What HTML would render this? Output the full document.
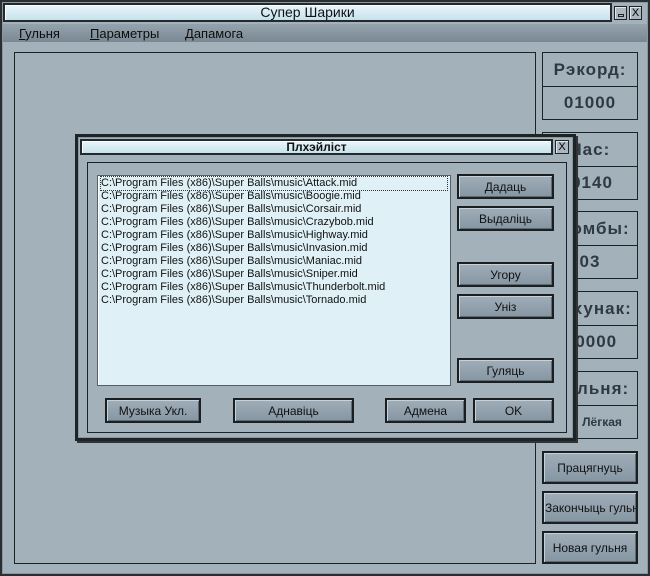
<!DOCTYPE html>
<html><head><meta charset="utf-8"><style>
*{margin:0;padding:0;box-sizing:border-box}
body{width:650px;height:576px;overflow:hidden;background:#a3b1bb;font-family:"Liberation Sans",sans-serif;position:relative}
.a{position:absolute}
#outer{left:0;top:0;width:650px;height:576px;border:2px solid #2a2f33;box-shadow:inset 0 0 0 1px #8a979f;background:#a3b1bb}
.title{background:linear-gradient(#e9f6fa,#c7e2ec);border:2px solid #23292d;box-shadow:inset 1px 1px 0 #fff;text-align:center;color:#111}
.btnsq{background:#aab7c0;border:1px solid #222;box-shadow:inset 1px 1px 0 #e0e8ec}
#menu{left:3px;top:24px;width:644px;height:18px;background:linear-gradient(#95a3ae,#7a8894);font-size:13px;color:#0d0d0d}
#menu span{position:absolute;top:2px}
.panel{border:1px solid #1d2226;background:#a3b1bb}
.lab{font-weight:bold;font-size:17px;letter-spacing:1px;color:#2e3944;text-align:center;display:flex;align-items:center;justify-content:center;white-space:nowrap}
.btn{background:linear-gradient(#9fadb8,#8596a3);border:2px solid #1b1f22;box-shadow:inset 1px 1px 0 #c5d0d7,inset -1px -1px 0 #5f6c76;font-size:12px;color:#111;display:flex;align-items:center;justify-content:center;white-space:nowrap;overflow:hidden}
.list{background:#dff1f6;border:1px solid #55606a;box-shadow:inset 1px 1px 0 #fff;font-size:11px;color:#111;line-height:13px;padding:1px 3px}
</style></head><body>
<div id="outer" class="a"></div>
<div class="a title" style="left:3px;top:3px;width:609px;height:19px;font-size:14px;line-height:15px">Супер Шарики</div>
<div class="a btnsq" style="left:614px;top:6px;width:13px;height:14px"><div class="a" style="left:3px;top:7px;width:6px;height:3px;border:1px solid #222"></div></div>
<div class="a btnsq" style="left:629px;top:6px;width:13px;height:14px;font-size:11px;text-align:center;line-height:12px">X</div>
<div id="menu" class="a"><span style="left:16px"><u>Г</u>ульня</span><span style="left:87px"><u>П</u>араметры</span><span style="left:182px"><u>Д</u>апамога</span></div>

<div class="a panel" style="left:14px;top:52px;width:522px;height:512px"></div>

<div class="a panel lab" style="left:542px;top:52px;width:96px;height:35px">Рэкорд:</div>
<div class="a panel lab" style="left:542px;top:86px;width:96px;height:34px">01000</div>
<div class="a panel lab" style="left:542px;top:132px;width:96px;height:35px">Час:</div>
<div class="a panel lab" style="left:542px;top:166px;width:96px;height:34px;padding-left:4px">0140</div>
<div class="a panel lab" style="left:542px;top:211px;width:96px;height:35px;padding-left:8px">Бомбы:</div>
<div class="a panel lab" style="left:542px;top:245px;width:96px;height:34px">03</div>
<div class="a panel lab" style="left:542px;top:291px;width:96px;height:35px;padding-left:2px">Рахунак:</div>
<div class="a panel lab" style="left:542px;top:325px;width:96px;height:34px;padding-left:2px">00000</div>
<div class="a panel lab" style="left:542px;top:371px;width:96px;height:35px;padding-left:6px">Гульня:</div>
<div class="a panel lab" style="left:542px;top:405px;width:96px;height:34px;font-size:12px;letter-spacing:0;padding-left:24px">Лёгкая</div>
<div class="a btn" style="left:542px;top:451px;width:96px;height:33px">Працягнуць</div>
<div class="a btn" style="left:542px;top:491px;width:96px;height:33px;justify-content:flex-start;padding-left:1px">Закончыць гульню</div>
<div class="a btn" style="left:542px;top:531px;width:96px;height:33px">Новая гульня</div>

<div class="a" style="left:75px;top:134px;width:501px;height:307px;background:#a3b1bb;border:3px solid #1e2326;box-shadow:inset 0 0 0 1px #8896a0,2px 2px 0 #333"></div>
<div class="a title" style="left:80px;top:139px;width:473px;height:16px;font-size:12px;font-weight:bold;line-height:12px">Плхэйліст</div>
<div class="a btnsq" style="left:555px;top:140px;width:14px;height:14px;font-size:11px;text-align:center;line-height:12px">X</div>
<div class="a panel" style="left:87px;top:162px;width:480px;height:271px"></div>
<div class="a list" style="left:97px;top:175px;width:354px;height:211px">
<div style="outline:1px dotted #333;width:346px">C:\Program Files (x86)\Super Balls\music\Attack.mid</div>
<div>C:\Program Files (x86)\Super Balls\music\Boogie.mid</div>
<div>C:\Program Files (x86)\Super Balls\music\Corsair.mid</div>
<div>C:\Program Files (x86)\Super Balls\music\Crazybob.mid</div>
<div>C:\Program Files (x86)\Super Balls\music\Highway.mid</div>
<div>C:\Program Files (x86)\Super Balls\music\Invasion.mid</div>
<div>C:\Program Files (x86)\Super Balls\music\Maniac.mid</div>
<div>C:\Program Files (x86)\Super Balls\music\Sniper.mid</div>
<div>C:\Program Files (x86)\Super Balls\music\Thunderbolt.mid</div>
<div>C:\Program Files (x86)\Super Balls\music\Tornado.mid</div>
</div>
<div class="a btn" style="left:457px;top:174px;width:97px;height:25px">Дадаць</div>
<div class="a btn" style="left:457px;top:206px;width:97px;height:25px">Выдаліць</div>
<div class="a btn" style="left:457px;top:262px;width:97px;height:25px">Угору</div>
<div class="a btn" style="left:457px;top:294px;width:97px;height:25px">Уніз</div>
<div class="a btn" style="left:457px;top:358px;width:97px;height:25px">Гуляць</div>
<div class="a btn" style="left:105px;top:398px;width:96px;height:25px">Музыка Укл.</div>
<div class="a btn" style="left:233px;top:398px;width:121px;height:25px">Аднавіць</div>
<div class="a btn" style="left:385px;top:398px;width:81px;height:25px">Адмена</div>
<div class="a btn" style="left:473px;top:398px;width:81px;height:25px">OK</div>
</body></html>
